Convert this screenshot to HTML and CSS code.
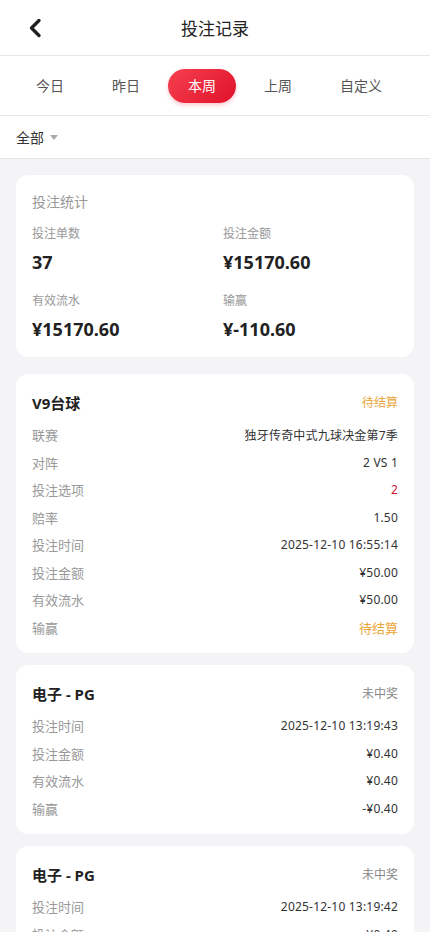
FILE: index.html
```html
<!DOCTYPE html>
<html>

<head>
    <title>投注记录</title>
    <meta charset='utf-8' />
    <meta name="viewport" content="width=device-width, initial-scale=1">
    <link rel="stylesheet" href="styles.css">
</head>

<body>
    <div class="header">
        <a class="back" href="#">
            <svg width="14" height="20" viewBox="0 0 14 20">
                <path d="M11 2.5 L3.5 10 L11 17.5" fill="none" stroke="#222" stroke-width="3.4" stroke-linecap="round" stroke-linejoin="round" />
            </svg>
        </a>
        <div class="title">投注记录</div>
    </div>

    <div class="tabs">
        <span class="tab">今日</span>
        <span class="tab">昨日</span>
        <span class="tab active">本周</span>
        <span class="tab">上周</span>
        <span class="tab">自定义</span>
    </div>

    <div class="filter">
        <span>全部</span>
        <i class="caret"></i>
    </div>

    <div class="content">
        <!-- 统计 -->
        <div class="card stats">
            <div class="stats-title">投注统计</div>
            <div class="stats-grid">
                <div class="item">
                    <div class="label">投注单数</div>
                    <div class="value">37</div>
                </div>
                <div class="item">
                    <div class="label">投注金额</div>
                    <div class="value">¥15170.60</div>
                </div>
                <div class="item">
                    <div class="label">有效流水</div>
                    <div class="value">¥15170.60</div>
                </div>
                <div class="item">
                    <div class="label">输赢</div>
                    <div class="value">¥-110.60</div>
                </div>
            </div>
        </div>

        <!-- 记录 -->
        <div class="card record">
            <div class="rec-head">
                <span class="name">V9台球</span>
                <span class="status pending">待结算</span>
            </div>
            <div class="row"><span>联赛</span><em>独牙传奇中式九球决金第7季</em></div>
            <div class="row"><span>对阵</span><em>2 VS 1</em></div>
            <div class="row"><span>投注选项</span><em class="red">2</em></div>
            <div class="row"><span>赔率</span><em>1.50</em></div>
            <div class="row"><span>投注时间</span><em>2025-12-10 16:55:14</em></div>
            <div class="row"><span>投注金额</span><em>¥50.00</em></div>
            <div class="row"><span>有效流水</span><em>¥50.00</em></div>
            <div class="row"><span>输赢</span><em class="pending big">待结算</em></div>
        </div>

        <div class="card record">
            <div class="rec-head">
                <span class="name">电子 - PG</span>
                <span class="status">未中奖</span>
            </div>
            <div class="row"><span>投注时间</span><em>2025-12-10 13:19:43</em></div>
            <div class="row"><span>投注金额</span><em>¥0.40</em></div>
            <div class="row"><span>有效流水</span><em>¥0.40</em></div>
            <div class="row"><span>输赢</span><em>-¥0.40</em></div>
        </div>

        <div class="card record">
            <div class="rec-head">
                <span class="name">电子 - PG</span>
                <span class="status">未中奖</span>
            </div>
            <div class="row"><span>投注时间</span><em>2025-12-10 13:19:42</em></div>
            <div class="row"><span>投注金额</span><em>¥0.40</em></div>
            <div class="row"><span>有效流水</span><em>¥0.40</em></div>
            <div class="row"><span>输赢</span><em>-¥0.40</em></div>
        </div>
    </div>
</body>

</html>
```

FILE: styles.css
```css
* {
    margin: 0;
    padding: 0;
    box-sizing: border-box;
}

body {
    background: #f4f4f6;
    font-family: "Noto Sans", "Noto Sans CJK SC", sans-serif;
    color: #333;
    font-size: 13px;
}

.header {
    height: 56px;
    background: #fff;
    border-bottom: 1px solid #e6e6e8;
    display: flex;
    align-items: center;
    justify-content: center;
    position: relative;
}

.header .back {
    position: absolute;
    left: 28px;
    top: 18px;
    display: flex;
}

.header .title {
    font-size: 17px;
    color: #222;
}

.tabs {
    height: 60px;
    background: #fff;
    border-bottom: 1px solid #e6e6e8;
    display: flex;
    align-items: center;
    gap: 8px;
    padding: 0 16px;
}

.tabs .tab {
    height: 34px;
    line-height: 34px;
    padding: 0 20px;
    border-radius: 17px;
    font-size: 14px;
    color: #555;
}

.tabs .tab.active {
    color: #fff;
    background: linear-gradient(135deg, #f5404f, #e1122b);
    box-shadow: 0 2px 4px rgba(230, 30, 50, 0.25);
}

.filter {
    height: 43px;
    background: #fff;
    border-bottom: 1px solid #e6e6e8;
    display: flex;
    align-items: center;
    padding: 0 16px;
    font-size: 14px;
    color: #333;
}

.filter .caret {
    margin-left: 6px;
    margin-top: 1px;
    border-left: 4px solid transparent;
    border-right: 4px solid transparent;
    border-top: 5px solid #aaa;
}

.content {
    padding: 16px 16px 0;
}

.card {
    background: #fff;
    border-radius: 12px;
    padding: 16px 16px 12px;
    margin-bottom: 12px;
}

.stats {
    padding-bottom: 14px;
    margin-bottom: 17px;
}

.stats .stats-title {
    line-height: 22px;
    color: #999;
    font-size: 14px;
    margin-bottom: 10px;
}

.stats-grid {
    display: grid;
    grid-template-columns: 191px 1fr;
    row-gap: 14px;
}

.stats .label {
    line-height: 22px;
    color: #999;
    font-size: 12px;
}

.stats .value {
    margin-top: 3px;
    line-height: 28px;
    font-size: 18px;
    font-weight: bold;
    color: #222;
}

.rec-head {
    display: flex;
    justify-content: space-between;
    align-items: center;
    height: 24px;
    margin-bottom: 7px;
}

.rec-head .name {
    font-size: 15px;
    font-weight: bold;
    color: #222;
}

.rec-head .status {
    font-size: 12px;
    color: #888;
}

.row {
    display: flex;
    justify-content: space-between;
    align-items: center;
    height: 27.5px;
}

.row span {
    color: #999;
    font-size: 13px;
}

.row em {
    font-style: normal;
    color: #333;
    font-size: 12px;
    letter-spacing: 0.2px;
}

.pending {
    color: #eaa53a !important;
}

.row em.big {
    font-size: 13px;
    letter-spacing: 0;
}

.red {
    color: #d0142c !important;
}
```
